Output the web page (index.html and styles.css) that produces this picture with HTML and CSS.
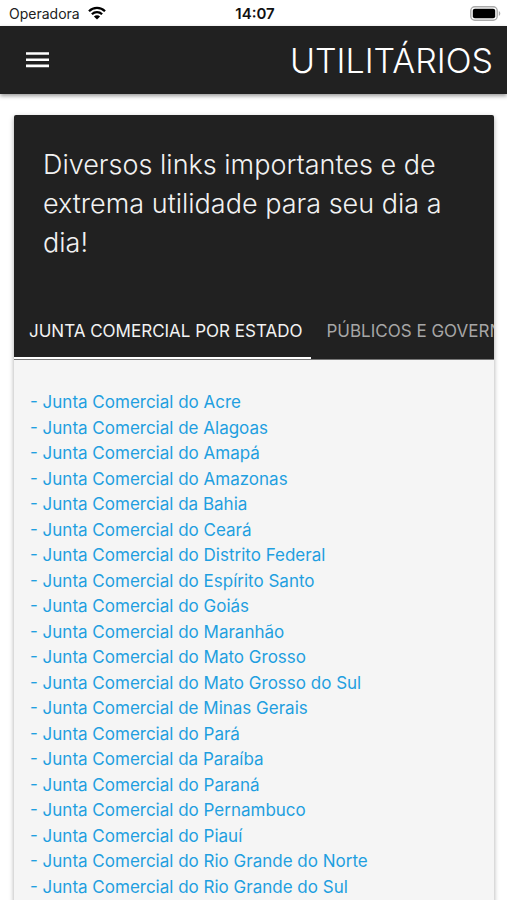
FILE: index.html
```html
<!DOCTYPE html>
<html lang="pt-BR">
<head>
<meta charset="utf-8">
<meta name="viewport" content="width=device-width, initial-scale=1">
<title>Utilitários</title>
<link rel="stylesheet" href="styles.css">
</head>
<body>
<div class="status">
  <div class="carrier">
    <span>Operadora</span>
    <svg width="18" height="14" viewBox="0 0 18 14" aria-hidden="true">
      <path d="M1 5.2a11.4 11.4 0 0 1 16 0M3.900 8.200a7.300 7.300 0 0 1 10.200 0" fill="none" stroke="#000" stroke-width="2.300"/>
      <path d="M9 13.600 5.900 10.500a4.400 4.400 0 0 1 6.200 0z"/>
    </svg>
  </div>
  <time class="clock">14:07</time>
  <svg class="battery" width="31" height="15" viewBox="0 0 31 15" aria-hidden="true">
    <rect x=".8" y=".8" width="26.400" height="13.400" rx="4" fill="#fff" stroke="#aaa" stroke-width="1.400"/>
    <rect x="2.800" y="2.800" width="22.400" height="9.400" rx="2"/>
    <path d="M28.800 5v5c2-1 2-4 0-5z" fill="#aaa"/>
  </svg>
</div>
<header class="navbar">
  <button class="menu" type="button" aria-label="Menu">
    <svg width="23" height="16" viewBox="0 0 23 16" aria-hidden="true"><path d="M0 1.500h23M0 7.700h23M0 13.900h23" stroke="#fff" stroke-width="2.600"/></svg>
  </button>
  <h1 class="title">UTILITÁRIOS</h1>
</header>
<main class="card">
  <p class="intro">Diversos links importantes e de extrema utilidade para seu dia a dia!</p>
  <nav class="tabs">
    <a class="tab active" href="#junta">JUNTA COMERCIAL POR ESTADO</a>
    <a class="tab" href="#publicos">PÚBLICOS E GOVERNO</a>
  </nav>
  <ul class="links" id="junta">
    <li><a href="#ac">- Junta Comercial do Acre</a></li>
    <li><a href="#al">- Junta Comercial de Alagoas</a></li>
    <li><a href="#ap">- Junta Comercial do Amapá</a></li>
    <li><a href="#am">- Junta Comercial do Amazonas</a></li>
    <li><a href="#ba">- Junta Comercial da Bahia</a></li>
    <li><a href="#ce">- Junta Comercial do Ceará</a></li>
    <li><a href="#df">- Junta Comercial do Distrito Federal</a></li>
    <li><a href="#es">- Junta Comercial do Espírito Santo</a></li>
    <li><a href="#go">- Junta Comercial do Goiás</a></li>
    <li><a href="#ma">- Junta Comercial do Maranhão</a></li>
    <li><a href="#mt">- Junta Comercial do Mato Grosso</a></li>
    <li><a href="#ms">- Junta Comercial do Mato Grosso do Sul</a></li>
    <li><a href="#mg">- Junta Comercial de Minas Gerais</a></li>
    <li><a href="#pa">- Junta Comercial do Pará</a></li>
    <li><a href="#pb">- Junta Comercial da Paraíba</a></li>
    <li><a href="#pr">- Junta Comercial do Paraná</a></li>
    <li><a href="#pe">- Junta Comercial do Pernambuco</a></li>
    <li><a href="#pi">- Junta Comercial do Piauí</a></li>
    <li><a href="#rn">- Junta Comercial do Rio Grande do Norte</a></li>
    <li><a href="#rs">- Junta Comercial do Rio Grande do Sul</a></li>
  </ul>
</main>
</body>
</html>
```
FILE: styles.css
```css
* { box-sizing: border-box; }
html { scrollbar-width: none; }
body {
  margin: 0;
  background: #fff;
  font-family: Inter, "Liberation Sans", sans-serif;
}
.status {
  display: grid;
  grid-template-columns: 1fr auto 1fr;
  align-items: center;
  height: 26px;
  padding: 0 6px 0 9px;
  font-size: 14px;
  color: #222;
}
.carrier { display: flex; align-items: center; gap: 8px; }
.clock { font-size: 15px; font-weight: 600; color: #111; }
.battery { justify-self: end; }
.navbar {
  display: flex;
  align-items: center;
  justify-content: space-between;
  height: 68px;
  padding: 0 14px 0 26px;
  background: #212121;
  color: #fff;
  box-shadow: 0 2px 4px rgba(0, 0, 0, .4);
}
.menu {
  display: flex;
  padding: 0;
  border: 0;
  background: none;
}
.title { margin: 0; font-size: 34px; font-weight: 300; }
.card {
  margin: 21px 13px 0 14px;
  border-radius: 2px;
  overflow: hidden;
  background: #f5f5f5;
  box-shadow: 0 2px 5px rgba(0, 0, 0, .35);
}
.intro {
  margin: 0;
  padding: 30px 29px 40px;
  background: #212121;
  color: #f2f2f2;
  font-size: 27px;
  font-weight: 300;
  line-height: 39px;
}
.tabs {
  display: flex;
  height: 58px;
  overflow: hidden;
  background: #212121;
  border-bottom: 1px solid #777;
}
.tab {
  flex: none;
  height: 57px;
  padding: 0 9px 0 15px;
  border-bottom: 2px solid transparent;
  color: #a6a6a6;
  font-size: 17px;
  line-height: 58px;
  text-decoration: none;
  white-space: nowrap;
}
.tab.active { color: #f2f2f2; border-color: #fff; }
.links {
  margin: 0;
  padding: 30px 16px;
  list-style: none;
  font-size: 17px;
  line-height: 1.5;
}
.links a { color: #1f9fe0; text-decoration: none; }
```
